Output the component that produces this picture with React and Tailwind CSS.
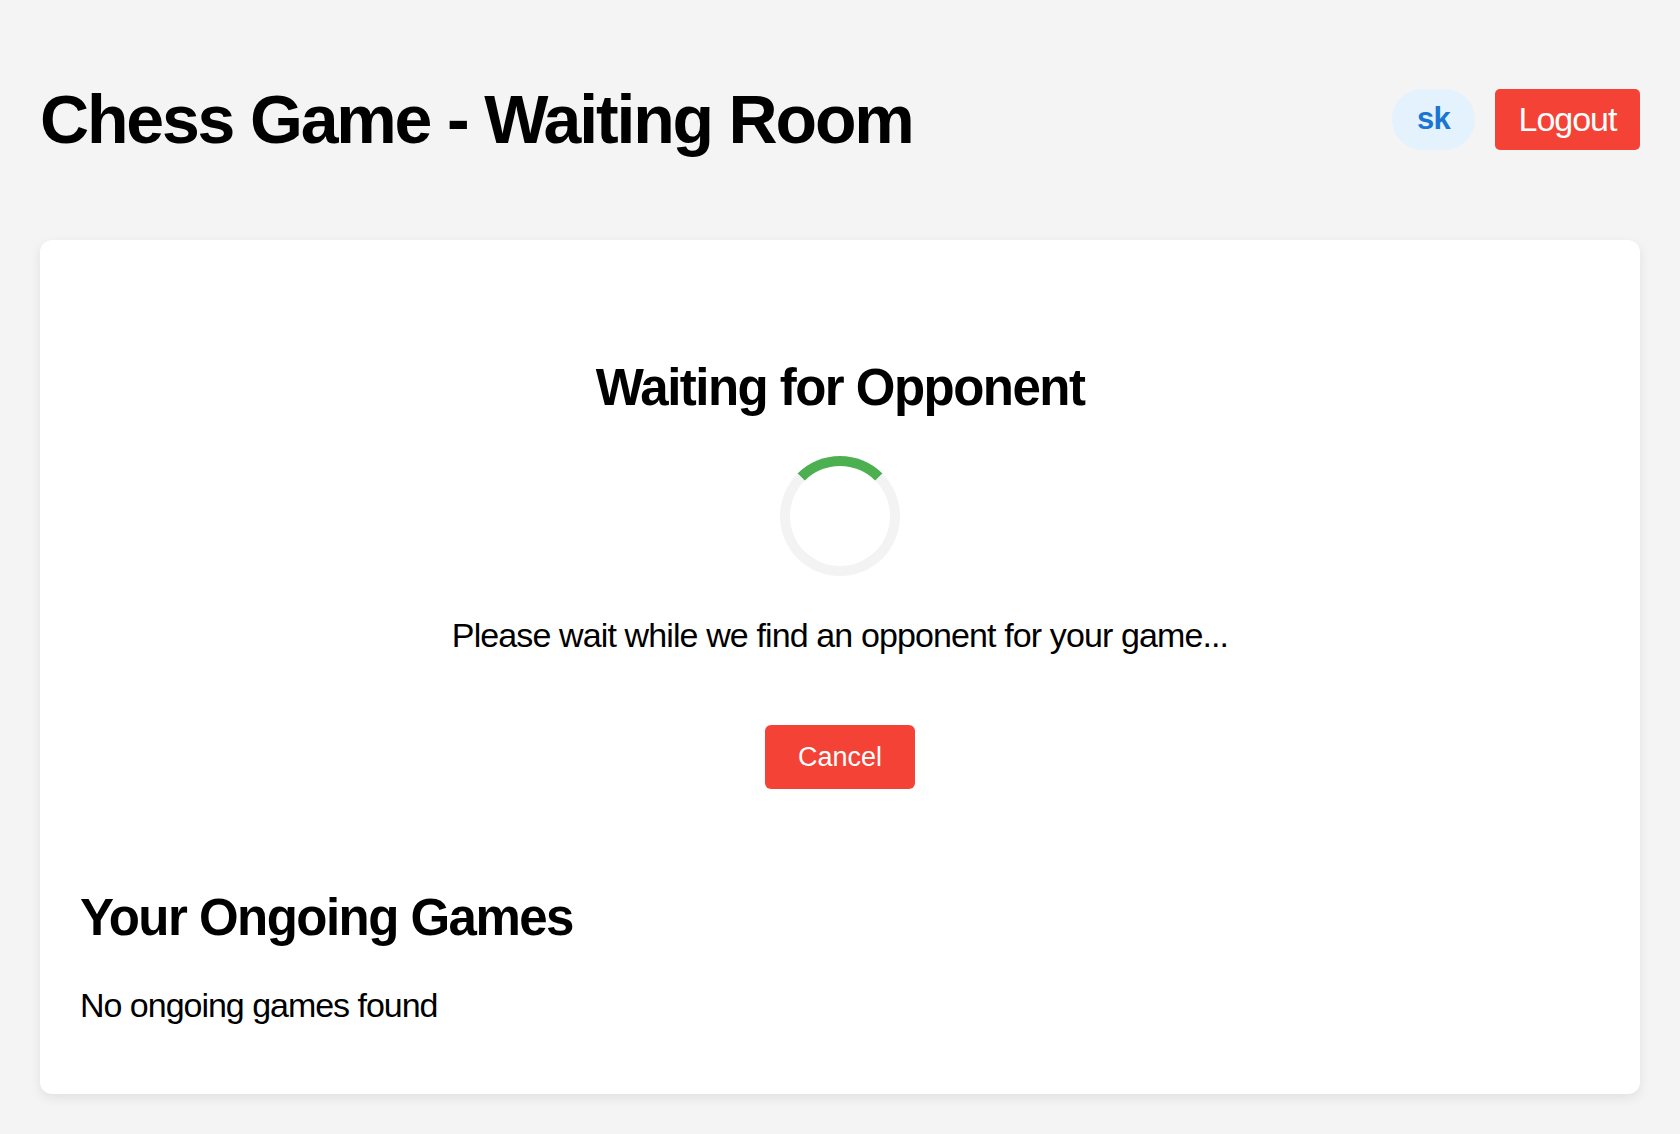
export default function App() {
  return (
    <div
      className="min-h-screen w-full bg-[#f4f4f4] px-[40px] pb-[40px] text-black"
      style={{ fontFamily: '"Liberation Sans", Arial, sans-serif' }}
    >
      <header className="flex items-center justify-between pt-[80px]">
        <h1 className="m-0 text-[68px] font-bold leading-[78px] tracking-[-0.032em]">Chess Game - Waiting Room</h1>
        <div className="flex items-center gap-[20px]">
          <div className="flex h-[61px] w-[83px] items-center justify-center rounded-full bg-[#e3f2fd] text-[31px] font-bold tracking-[-0.02em] text-[#1976d2]">
            sk
          </div>
          <button className="flex h-[61px] w-[145px] items-center justify-center rounded-[5px] bg-[#f44336] text-[34px] tracking-[-0.03em] text-white">
            Logout
          </button>
        </div>
      </header>

      <main className="mt-[82px] rounded-[12px] bg-white px-[40px] pb-[69px] pt-[118px] shadow-[0_4px_12px_rgba(0,0,0,0.08)]">
        <h2 className="text-center text-[51px] font-bold leading-[59px] tracking-[-0.03em]">Waiting for Opponent</h2>
        <div className="mx-auto mt-[39px] h-[120px] w-[120px] rounded-full border-[10px] border-[#f3f3f3] border-t-[#4caf50]" />
        <p className="mt-[40px] text-center text-[34px] leading-[39px] tracking-[-0.026em]">
          Please wait while we find an opponent for your game...
        </p>
        <button className="mx-auto mt-[70px] flex h-[64px] w-[150px] items-center justify-center rounded-[6px] bg-[#f44336] text-[27px] text-white">
          Cancel
        </button>
        <h2 className="mt-[99px] text-[51px] font-bold leading-[59px] tracking-[-0.03em]">Your Ongoing Games</h2>
        <p className="mt-[39px] text-[34px] leading-[39px] tracking-[-0.03em]">No ongoing games found</p>
      </main>
    </div>
  );
}
